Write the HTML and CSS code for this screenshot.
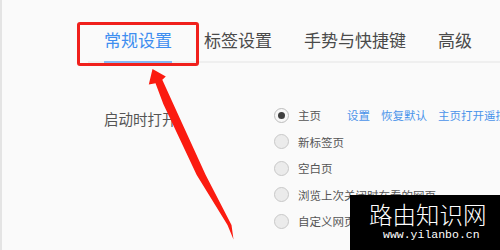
FILE: index.html
```html
<!DOCTYPE html>
<html lang="zh-CN">
<head>
<meta charset="utf-8">
<title>常规设置</title>
<link rel="stylesheet" href="styles.css">
</head>
<body>
<div class="page">
  <nav class="tabs">
    <a class="tab active"><span class="tab-label">常规设置</span></a>
    <a class="tab"><span class="tab-label">标签设置</span></a>
    <a class="tab"><span class="tab-label">手势与快捷键</span></a>
    <a class="tab"><span class="tab-label">高级</span></a>
  </nav>
  <section class="settings">
    <div class="label">启动时打开</div>
    <div class="options">
      <div class="option">
        <span class="radio checked"></span>
        <span class="opt-text">主页</span>
        <span class="links"><a>设置</a><a>恢复默认</a><a>主页打开遥控器</a></span>
      </div>
      <div class="option"><span class="radio"></span><span class="opt-text">新标签页</span></div>
      <div class="option"><span class="radio"></span><span class="opt-text">空白页</span></div>
      <div class="option"><span class="radio"></span><span class="opt-text">浏览上次关闭时在看的网页</span></div>
      <div class="option"><span class="radio"></span><span class="opt-text">自定义网页</span></div>
    </div>
  </section>
  <div class="highlight"></div>
  <svg class="arrow" width="500" height="250" viewBox="0 0 500 250">
    <polygon points="152.5,69 165.8,76.5 162.3,79.8 173.3,104 205.7,175 231.5,225 233.5,239.5 227.5,225 196.7,175 163.3,104 155.5,83.2 148.8,84.6" fill="#fb1b10"/>
  </svg>
  <div class="watermark">
    <div class="wm-title">路由知识网</div>
    <div class="wm-url">www.yilanbo.cn</div>
  </div>
</div>
</body>
</html>
```

FILE: styles.css
```css
html, body {
  margin: 0;
  padding: 0;
}

body {
  font-family: "Noto Sans CJK SC", "Noto Sans", sans-serif;
  background: #fafafa;
}

.page {
  position: relative;
  width: 500px;
  height: 250px;
  overflow: hidden;
  background: #fafafa;
  box-shadow: inset 2px 0 #e4e4e4;
}

.tabs {
  display: flex;
  margin-left: 88px;
  height: 61px;
  border-bottom: 2px solid #efefef;
}

.tab {
  padding: 0 16px;
  color: #4a4a4a;
  font-size: 17px;
  cursor: pointer;
}

.tab-label {
  display: block;
  padding-top: 29px;
  padding-bottom: 11px;
  line-height: 21px;
  white-space: nowrap;
}

.tab.active .tab-label {
  color: #3e8ef0;
  border-bottom: 2px solid #86b9f4;
}

.settings {
  display: flex;
  margin-top: 39px;
  padding-left: 104px;
}

.label {
  width: 170px;
  flex: none;
  padding-top: 3px;
  line-height: 27px;
  font-size: 14.5px;
  color: #555;
  white-space: nowrap;
}

.options {
  display: flex;
  flex-direction: column;
}

.option {
  display: flex;
  align-items: center;
  height: 26.5px;
  white-space: nowrap;
}

.radio {
  display: flex;
  align-items: center;
  justify-content: center;
  flex: none;
  width: 15px;
  height: 15px;
  box-sizing: border-box;
  border: 1px solid #c8c8c8;
  border-radius: 50%;
  background: #ebebeb;
}

.radio.checked {
  background: #f7f7f7;
  border-color: #bdbdbd;
}

.radio.checked::after {
  content: "";
  width: 7px;
  height: 7px;
  border-radius: 50%;
  background: #3f3f3f;
}

.opt-text {
  margin-left: 9px;
  font-size: 11.5px;
  color: #555;
}

.links {
  display: flex;
  gap: 11px;
  margin-left: 26px;
  font-size: 11.5px;
}

.links a {
  color: #4a94ea;
  cursor: pointer;
}

.highlight {
  position: absolute;
  left: 77px;
  top: 22px;
  width: 122px;
  height: 44px;
  box-sizing: border-box;
  border: 3px solid #f0201c;
  border-radius: 3px;
}

.arrow {
  position: absolute;
  left: 0;
  top: 0;
}

.watermark {
  position: absolute;
  left: 350px;
  top: 195px;
  width: 150px;
  height: 55px;
  background: #000;
  color: #fff;
  box-sizing: border-box;
  padding: 6px 0 0 19px;
}

.wm-title {
  font-size: 23.5px;
  font-weight: 300;
  line-height: 26px;
  white-space: nowrap;
}

.wm-url {
  margin: 1px 0 0 14px;
  font-family: "Liberation Mono", monospace;
  font-size: 11.5px;
  line-height: 14px;
  white-space: nowrap;
}
```
